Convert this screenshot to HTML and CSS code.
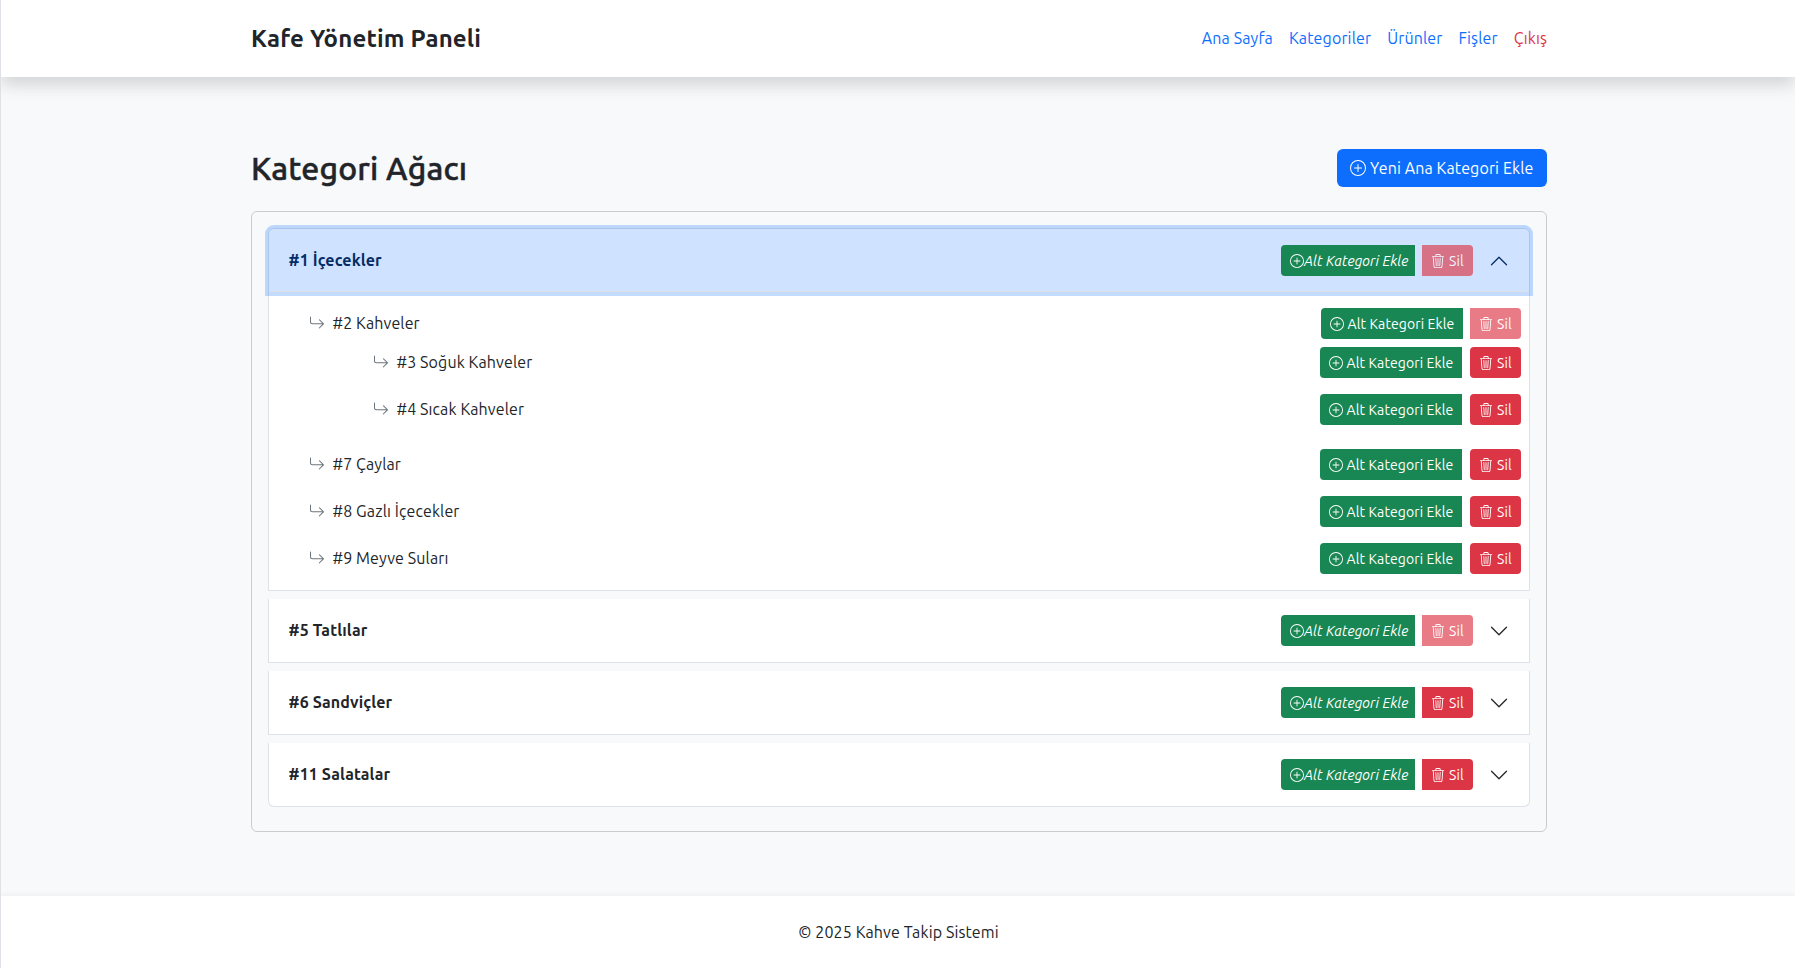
FILE: index.html
```html
<!DOCTYPE html>
<html lang="tr">
<head>
<meta charset="utf-8">
<title>Kafe Yönetim Paneli</title>
<link rel="stylesheet" href="styles.css">
</head>
<body>
<svg class="sprite" aria-hidden="true">
  <symbol id="plus" viewBox="0 0 16 16"><path d="M8 15A7 7 0 1 1 8 1a7 7 0 0 1 0 14m0 1A8 8 0 1 0 8 0a8 8 0 0 0 0 16"/><path d="M8 4a.5.5 0 0 1 .5.5v3h3a.5.5 0 0 1 0 1h-3v3a.5.5 0 0 1-1 0v-3h-3a.5.5 0 0 1 0-1h3v-3A.5.5 0 0 1 8 4"/></symbol>
  <symbol id="trash" viewBox="0 0 16 16"><path d="M6.5 1h3a.5.5 0 0 1 .5.5v1H6v-1a.5.5 0 0 1 .5-.5M11 2.5v-1A1.5 1.5 0 0 0 9.5 0h-3A1.5 1.5 0 0 0 5 1.5v1H1.5a.5.5 0 0 0 0 1h.538l.853 10.66A2 2 0 0 0 4.885 16h6.23a2 2 0 0 0 1.994-1.84l.853-10.66h.538a.5.5 0 0 0 0-1zm1.958 1-.846 10.58a1 1 0 0 1-.997.92h-6.23a1 1 0 0 1-.997-.92L3.042 3.5zm-7.487 1a.5.5 0 0 1 .528.47l.5 8.5a.5.5 0 0 1-.998.06L5 5.03a.5.5 0 0 1 .47-.53Zm5.058 0a.5.5 0 0 1 .47.53l-.5 8.5a.5.5 0 1 1-.998-.06l.5-8.5a.5.5 0 0 1 .528-.47M8 4.5a.5.5 0 0 1 .5.5v8.5a.5.5 0 0 1-1 0V5a.5.5 0 0 1 .5-.5"/></symbol>
  <symbol id="arrow" viewBox="0 0 16 16"><path d="M1.5 1.5A.5.5 0 0 0 1 2v4.8a2.5 2.5 0 0 0 2.5 2.5h9.793l-3.347 3.346a.5.5 0 0 0 .708.708l4.2-4.2a.5.5 0 0 0 0-.708l-4-4a.5.5 0 0 0-.708.708L13.293 8.3H3.5A1.5 1.5 0 0 1 2 6.8V2a.5.5 0 0 0-.5-.5"/></symbol>
  <symbol id="chevron" viewBox="0 0 16 16"><path d="m2 5 6 6 6-6" fill="none" stroke="currentColor" stroke-linecap="round" stroke-linejoin="round"/></symbol>
</svg>
<header class="topbar">
  <h1 class="brand"><span>Kafe Yönetim Paneli</span></h1>
  <nav class="nav"><a href="#">Ana Sayfa</a><a href="#">Kategoriler</a><a href="#">Ürünler</a><a href="#">Fişler</a><a href="#" class="exit">Çıkış</a></nav>
</header>
<main class="content">
  <div class="heading">
    <h2 class="title">Kategori Ağacı</h2>
    <button class="btn-main"><svg><use href="#plus"/></svg><span>Yeni Ana Kategori Ekle</span></button>
  </div>
  <div class="tree">
    <section class="item">
      <div class="item-head open"><span class="name">#1 İçecekler</span>
        <button class="btn add slanted"><svg><use href="#plus"/></svg><i>Alt Kategori Ekle</i></button>
        <button class="btn del joined off"><svg><use href="#trash"/></svg><span>Sil</span></button>
        <svg class="chevron up"><use href="#chevron"/></svg></div>
      <div class="item-body">
        <div class="row first"><svg class="arrow"><use href="#arrow"/></svg><span class="name">#2 Kahveler</span>
          <button class="btn add"><svg><use href="#plus"/></svg><span>Alt Kategori Ekle</span></button>
          <button class="btn del joined off"><svg><use href="#trash"/></svg><span>Sil</span></button></div>
        <div class="children">
          <div class="row"><svg class="arrow"><use href="#arrow"/></svg><span class="name">#3 Soğuk Kahveler</span>
            <button class="btn add"><svg><use href="#plus"/></svg><span>Alt Kategori Ekle</span></button>
            <button class="btn del"><svg><use href="#trash"/></svg><span>Sil</span></button></div>
          <div class="row"><svg class="arrow"><use href="#arrow"/></svg><span class="name">#4 Sıcak Kahveler</span>
            <button class="btn add"><svg><use href="#plus"/></svg><span>Alt Kategori Ekle</span></button>
            <button class="btn del"><svg><use href="#trash"/></svg><span>Sil</span></button></div>
        </div>
        <div class="row"><svg class="arrow"><use href="#arrow"/></svg><span class="name">#7 Çaylar</span>
          <button class="btn add"><svg><use href="#plus"/></svg><span>Alt Kategori Ekle</span></button>
          <button class="btn del"><svg><use href="#trash"/></svg><span>Sil</span></button></div>
        <div class="row"><svg class="arrow"><use href="#arrow"/></svg><span class="name">#8 Gazlı İçecekler</span>
          <button class="btn add"><svg><use href="#plus"/></svg><span>Alt Kategori Ekle</span></button>
          <button class="btn del"><svg><use href="#trash"/></svg><span>Sil</span></button></div>
        <div class="row"><svg class="arrow"><use href="#arrow"/></svg><span class="name">#9 Meyve Suları</span>
          <button class="btn add"><svg><use href="#plus"/></svg><span>Alt Kategori Ekle</span></button>
          <button class="btn del"><svg><use href="#trash"/></svg><span>Sil</span></button></div>
      </div>
    </section>
    <section class="item">
      <div class="item-head"><span class="name">#5 Tatlılar</span>
        <button class="btn add slanted"><svg><use href="#plus"/></svg><i>Alt Kategori Ekle</i></button>
        <button class="btn del joined off"><svg><use href="#trash"/></svg><span>Sil</span></button>
        <svg class="chevron"><use href="#chevron"/></svg></div>
    </section>
    <section class="item">
      <div class="item-head"><span class="name">#6 Sandviçler</span>
        <button class="btn add slanted"><svg><use href="#plus"/></svg><i>Alt Kategori Ekle</i></button>
        <button class="btn del joined"><svg><use href="#trash"/></svg><span>Sil</span></button>
        <svg class="chevron"><use href="#chevron"/></svg></div>
    </section>
    <section class="item">
      <div class="item-head"><span class="name">#11 Salatalar</span>
        <button class="btn add slanted"><svg><use href="#plus"/></svg><i>Alt Kategori Ekle</i></button>
        <button class="btn del joined"><svg><use href="#trash"/></svg><span>Sil</span></button>
        <svg class="chevron"><use href="#chevron"/></svg></div>
    </section>
  </div>
</main>
<footer class="footer"><span>© 2025 Kahve Takip Sistemi</span></footer>
</body>
</html>
```
FILE: styles.css
```css
* { box-sizing: border-box; }
body {
  margin: 0;
  height: 968px;
  display: flex;
  flex-direction: column;
  overflow: hidden;
  border-left: 1px solid #dee2e6;
  background: #f8f9fb;
  color: #212529;
  font: 16px/24px Ubuntu, "Noto Sans", sans-serif;
  letter-spacing: .12px;
}
.sprite { display: none; }
svg { fill: currentColor; flex: none; }
h1, h2 { margin: 0; }
.topbar {
  display: flex;
  justify-content: space-between;
  align-items: center;
  height: 77px;
  padding: 0 248px 0 250px;
  background: #fff;
  box-shadow: 0 8px 16px rgba(0, 0, 0, .15);
}
.brand { font-size: 24px; line-height: 29px; font-weight: 700; letter-spacing: .17px; }
.nav { display: flex; gap: 16px; padding-bottom: 1px; letter-spacing: .14px; }
.nav a { color: #0d6efd; text-decoration: none; }
.nav .exit { color: #dc3545; }
.content { flex: 1; padding: 72px 248px 0 250px; }
.heading { display: flex; justify-content: space-between; align-items: center; height: 38px; margin-bottom: 24px; }
.title { font-size: 32px; line-height: 38px; font-weight: 500; letter-spacing: .16px; -webkit-text-stroke: .5px currentColor; }
button { font: inherit; letter-spacing: .12px; border: 0; color: #fff; display: flex; align-items: center; padding: 0; white-space: nowrap; }
.btn-main { width: 210px; height: 38px; gap: 4px; padding-left: 13px; border-radius: 6px; background: #0d6efd; }
.btn-main svg { width: 16px; height: 16px; }
.tree {
  height: 621px;
  padding: 16px;
  border: 1px solid #c9ccd1;
  border-radius: 6px;
}
.item { margin-bottom: 8px; border: 1px solid #dee2e6; border-top: 0; background: #fff; }
.item:first-child { border-top: 1px solid #dee2e6; border-radius: 6px 6px 0 0; }
.item:last-child { border-radius: 0 0 6px 6px; }
.name { flex: 1; padding-bottom: 2px; white-space: nowrap; }
.item-head { display: flex; align-items: center; height: 63px; padding: 0 20px; font-weight: 700; }
.open {
  position: relative;
  border-radius: 5px 5px 0 0;
  background: #cfe2ff;
  color: #052c65;
  box-shadow: inset 0 -1px 0 #dee2e6, 0 0 0 4px rgba(13, 110, 253, .25);
}
.btn { height: 31px; padding-left: 9px; gap: 3.5px; font-size: 14px; font-weight: 400; }
.btn svg { width: 14px; height: 14px; }
.add { width: 142px; margin-right: 8px; border-radius: 4px 0 0 4px; background: #198754; }
.first .add { margin-right: 7px; }
.slanted { width: 134px; gap: .5px; padding-left: 8.5px; margin-right: 7px; }
.del { width: 51px; gap: 4px; border-radius: 4px; background: #dc3545; }
.joined { border-radius: 0 4px 4px 0; }
.off { opacity: .65; }
.chevron { width: 20px; height: 20px; margin-left: 16px; }
.up { transform: rotate(180deg); }
.item-head .name { margin-left: -.5px; }
.item-body { height: 298px; padding: 16px 8px 0 40px; }
.row { display: flex; align-items: center; height: 31px; margin-bottom: 16px; }
.first { margin-bottom: 8px; }
.arrow { width: 16px; height: 16px; margin: 0 7.5px 1px 0; color: #6c757d; }
.children { padding: 0 0 8px 64px; }
.footer {
  display: flex;
  align-items: center;
  justify-content: center;
  height: 72px;
  padding-left: 1px;
  background: #fff;
  box-shadow: 0 -2px 4px rgba(0, 0, 0, .04);
}
```
